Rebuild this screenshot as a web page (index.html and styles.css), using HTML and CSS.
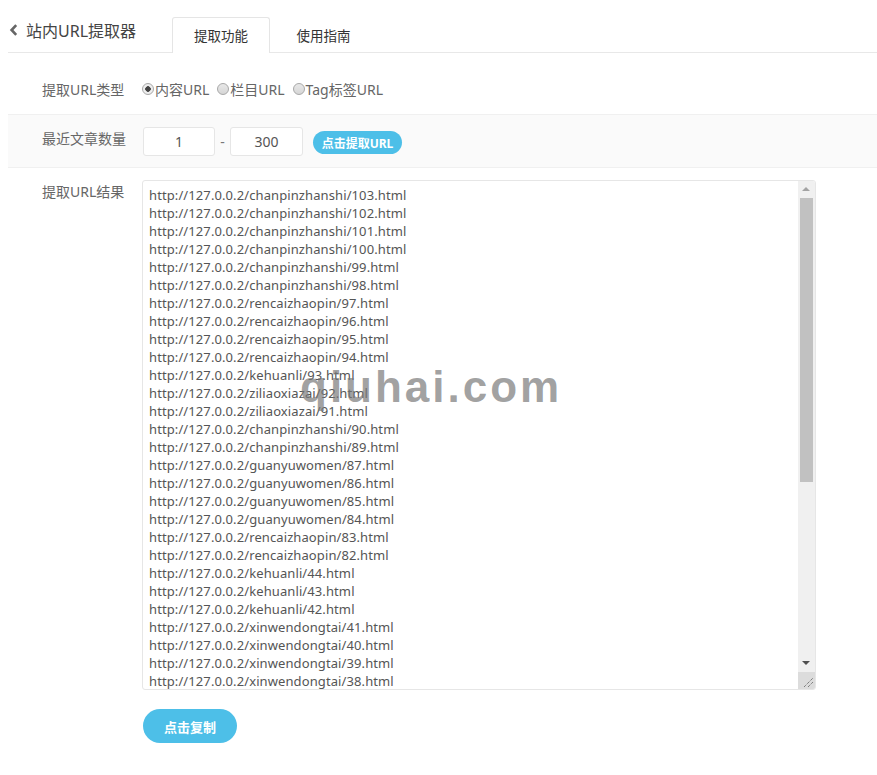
FILE: index.html
```html
<!DOCTYPE html>
<html lang="zh-CN">
<head>
<meta charset="utf-8">
<title>站内URL提取器</title>
<link rel="stylesheet" href="styles.css">
</head>
<body>
<div class="page">
  <div class="header">
    <div class="title">
      <svg class="back" width="9" height="12" viewBox="0 0 9 12"><path d="M7.2 1.2 L2.6 6 L7.2 10.8" fill="none" stroke="#666" stroke-width="2.6"/></svg>
      <span>站内URL提取器</span>
    </div>
    <div class="tabs">
      <div class="tab active">提取功能</div>
      <div class="tab">使用指南</div>
    </div>
  </div>

  <div class="row row-type">
    <div class="label">提取URL类型</div>
    <div class="field radios">
      <label class="radio"><span class="dot checked"></span>内容URL</label>
      <label class="radio"><span class="dot"></span>栏目URL</label>
      <label class="radio"><span class="dot"></span>Tag标签URL</label>
    </div>
  </div>

  <div class="row row-count">
    <div class="label">最近文章数量</div>
    <div class="field count">
      <div class="num">1</div>
      <span class="dash">-</span>
      <div class="num">300</div>
      <button class="btn-small">点击提取URL</button>
    </div>
  </div>

  <div class="row row-result">
    <div class="label">提取URL结果</div>
    <div class="field">
      <div class="textarea">
        <div class="lines">
          <div>http://127.0.0.2/chanpinzhanshi/103.html</div>
          <div>http://127.0.0.2/chanpinzhanshi/102.html</div>
          <div>http://127.0.0.2/chanpinzhanshi/101.html</div>
          <div>http://127.0.0.2/chanpinzhanshi/100.html</div>
          <div>http://127.0.0.2/chanpinzhanshi/99.html</div>
          <div>http://127.0.0.2/chanpinzhanshi/98.html</div>
          <div>http://127.0.0.2/rencaizhaopin/97.html</div>
          <div>http://127.0.0.2/rencaizhaopin/96.html</div>
          <div>http://127.0.0.2/rencaizhaopin/95.html</div>
          <div>http://127.0.0.2/rencaizhaopin/94.html</div>
          <div>http://127.0.0.2/kehuanli/93.html</div>
          <div>http://127.0.0.2/ziliaoxiazai/92.html</div>
          <div>http://127.0.0.2/ziliaoxiazai/91.html</div>
          <div>http://127.0.0.2/chanpinzhanshi/90.html</div>
          <div>http://127.0.0.2/chanpinzhanshi/89.html</div>
          <div>http://127.0.0.2/guanyuwomen/87.html</div>
          <div>http://127.0.0.2/guanyuwomen/86.html</div>
          <div>http://127.0.0.2/guanyuwomen/85.html</div>
          <div>http://127.0.0.2/guanyuwomen/84.html</div>
          <div>http://127.0.0.2/rencaizhaopin/83.html</div>
          <div>http://127.0.0.2/rencaizhaopin/82.html</div>
          <div>http://127.0.0.2/kehuanli/44.html</div>
          <div>http://127.0.0.2/kehuanli/43.html</div>
          <div>http://127.0.0.2/kehuanli/42.html</div>
          <div>http://127.0.0.2/xinwendongtai/41.html</div>
          <div>http://127.0.0.2/xinwendongtai/40.html</div>
          <div>http://127.0.0.2/xinwendongtai/39.html</div>
          <div>http://127.0.0.2/xinwendongtai/38.html</div>
        </div>
        <div class="scrollbar">
          <div class="arrow up"></div>
          <div class="track"><div class="thumb"></div></div>
          <div class="arrow down"></div>
          <div class="corner">
            <svg width="17" height="17" viewBox="0 0 17 17"><path d="M6 15 L15 6 M10 15 L15 10" stroke="#555" stroke-width="1" stroke-dasharray="1 1"/></svg>
          </div>
        </div>
      </div>
      <button class="btn-copy">点击复制</button>
    </div>
  </div>
</div>
<div class="watermark">qiuhai.com</div>
</body>
</html>
```

FILE: styles.css
```css
html, body {
  background: #fff;
}
body {
  margin: 0 0 0 8px;
  font-family: "Noto Sans", "Noto Sans CJK SC", sans-serif;
  color: #555;
  font-size: 14px;
}
.page {
  width: 869px;
}
.header {
  display: flex;
  align-items: flex-end;
  height: 52px;
  border-bottom: 1px solid #e8e8e8;
}
.title {
  display: flex;
  align-items: center;
  gap: 9px;
  width: 164px;
  align-self: stretch;
  padding-top: 8px;
  box-sizing: border-box;
  font-size: 16px;
  color: #444;
}
.title span {
  margin-left: -1px;
}
.back {
  margin-left: 1px;
}
.tabs {
  display: flex;
  gap: 6px;
}
.tab {
  width: 96px;
  height: 34px;
  line-height: 36px;
  text-align: center;
  font-size: 13.5px;
  color: #333;
  border: 1px solid transparent;
  border-bottom: none;
  margin-bottom: -1px;
  border-radius: 3px 3px 0 0;
}
.tab + .tab {
  text-indent: -3px;
}
.tab.active {
  background: #fff;
  border-color: #e5e5e5;
  height: 35px;
}
.row {
  display: flex;
  padding-left: 34px;
}
.label {
  width: 100px;
  flex: none;
  color: #666;
  font-size: 14px;
}
.row-type {
  height: 61px;
  box-sizing: border-box;
  padding-top: 28px;
  line-height: 18px;
  align-items: flex-start;
}
.radios {
  display: flex;
  align-items: flex-start;
  gap: 8px;
  color: #666;
}
.radio {
  display: flex;
  align-items: center;
  height: 18px;
}
.dot {
  width: 10px;
  height: 10px;
  border: 1px solid #a8a8a8;
  border-radius: 50%;
  background: linear-gradient(#e8e8e8, #d6d6d6);
  margin-right: 1px;
  position: relative;
  top: -1px;
}
.dot.checked {
  background: radial-gradient(circle, #444 0 2.5px, #eee 3px);
}
.row-count {
  background: #fafafa;
  border-top: 1px solid #f0f0f0;
  border-bottom: 1px solid #f0f0f0;
  height: 54px;
  box-sizing: border-box;
  align-items: flex-start;
  padding-top: 12px;
}
.row-count .label {
  line-height: 24px;
}
.count {
  display: flex;
  align-items: center;
  margin-left: 1px;
}
.num {
  width: 72px;
  height: 29px;
  box-sizing: border-box;
  border: 1px solid #e6e6e6;
  border-radius: 3px;
  background: #fff;
  text-align: center;
  line-height: 27px;
  color: #555;
}
.num + .dash + .num {
  width: 73px;
}
.dash {
  width: 15px;
  text-align: center;
  color: #777;
}
.btn-small {
  margin-left: 10px;
  margin-top: 2px;
  width: 89px;
  height: 23px;
  border: none;
  border-radius: 12px;
  background: #4dbfe8;
  color: #fff;
  font-family: inherit;
  font-size: 12px;
  font-weight: bold;
  padding: 0;
}
.row-result {
  padding-top: 12px;
}
.row-result .label {
  line-height: 24px;
}
.textarea {
  width: 674px;
  height: 510px;
  box-sizing: border-box;
  border: 1px solid #e6e6e6;
  border-radius: 3px;
  display: flex;
  overflow: hidden;
  background: #fff;
}
.lines {
  flex: 1;
  padding: 5px 0 0 6px;
  font-size: 13px;
  letter-spacing: 0.1px;
  line-height: 18px;
  color: #555;
  overflow: hidden;
  white-space: nowrap;
}
.scrollbar {
  width: 17px;
  flex: none;
  background: #f0f0f0;
  display: flex;
  flex-direction: column;
}
.arrow {
  height: 17px;
  flex: none;
  position: relative;
}
.arrow::after {
  content: "";
  position: absolute;
  left: 4px;
  top: 6px;
  border-left: 4px solid transparent;
  border-right: 4px solid transparent;
}
.arrow.up::after {
  border-bottom: 4px solid #a3a3a3;
}
.arrow.down::after {
  border-top: 4px solid #505050;
}
.track {
  flex: 1;
  padding: 0 2px;
}
.thumb {
  height: 284px;
  background: #c1c1c1;
}
.corner {
  height: 17px;
  flex: none;
  background: #dcdcdc;
}
.corner svg {
  display: block;
}
.btn-copy {
  display: block;
  margin: 19px 0 0 1px;
  width: 94px;
  height: 34px;
  border: none;
  border-radius: 17px;
  background: #4dbfe8;
  color: #fff;
  font-family: inherit;
  font-size: 13px;
  font-weight: bold;
  padding: 0;
}
.watermark {
  position: absolute;
  left: 300px;
  top: 362px;
  font-family: "Liberation Sans", sans-serif;
  font-weight: bold;
  font-size: 44px;
  letter-spacing: 3px;
  color: rgba(120, 120, 120, 0.7);
}
```
